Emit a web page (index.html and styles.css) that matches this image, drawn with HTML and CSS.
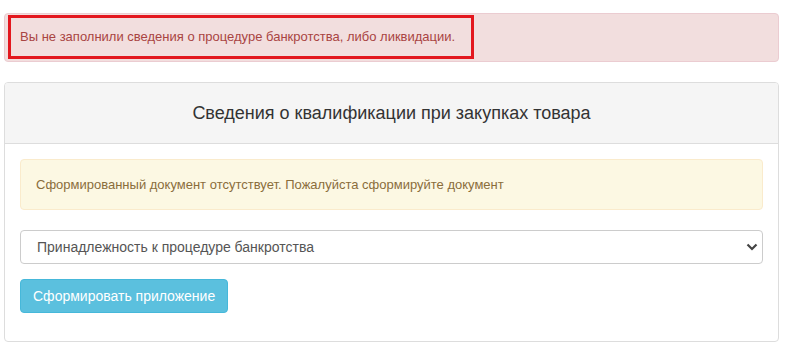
FILE: index.html
```html
<!DOCTYPE html>
<html lang="ru">

<head>
	<meta charset="UTF-8">
	<meta name="viewport" content="width=device-width, initial-scale=1.0">
	<title>Сведения о квалификации</title>

	<link rel="stylesheet" href="styles.css">
</head>

<body>
	<div class="page">
		<div class="alert alert-danger">
			<span class="mark">Вы не заполнили сведения о процедуре банкротства, либо ликвидации.</span>
		</div>

		<div class="panel">
			<div class="panel-heading">Сведения о квалификации при закупках товара</div>

			<div class="panel-body">
				<div class="alert alert-warning">
					Сформированный документ отсутствует. Пожалуйста сформируйте документ
				</div>

				<div class="select-wrap">
					<select class="form-control">
						<option>Принадлежность к процедуре банкротства</option>
					</select>
					<svg class="chevron" width="12" height="8" viewBox="0 0 12 8">
						<path d="M1.5 1.5 L6 6 L10.5 1.5" fill="none" stroke="#444" stroke-width="2.2" />
					</svg>
				</div>

				<button type="button" class="btn btn-info">Сформировать приложение</button>
			</div>
		</div>
	</div>
</body>

</html>
```

FILE: styles.css
```css
body {
	margin: 0;
	background-color: #fff;
	font-family: "Liberation Sans", Arial, sans-serif;
	color: #333;
}

.page {
	width: 775px;
	padding: 13px 0 0 4px;
}

.alert {
	border: 1px solid transparent;
	border-radius: 4px;
	font-size: 13px;
	line-height: 19px;
}

.alert-danger {
	background-color: #f2dede;
	border-color: #ebccd1;
	color: #a94442;
	padding: 1px 3px 2px 3px;
	margin-bottom: 20px;
}

.mark {
	display: block;
	width: 466px;
	box-sizing: border-box;
	border: 3px solid #e3171e;
	padding: 9px 9px 10px 9px;
}

.alert-warning {
	background-color: #fcf8e3;
	border-color: #faebcc;
	color: #8a6d3b;
	padding: 15px;
	margin-bottom: 20px;
}

.panel {
	border: 1px solid #ddd;
	border-radius: 4px;
	background-color: #fff;
}

.panel-heading {
	background-color: #f5f5f5;
	border-bottom: 1px solid #ddd;
	border-radius: 3px 3px 0 0;
	padding: 19px 15px;
	font-size: 18px;
	line-height: 22px;
	text-align: center;
	color: #333;
}

.panel-body {
	padding: 15px 15px 28px 15px;
}

.select-wrap {
	position: relative;
	margin-bottom: 15px;
}

.form-control {
	display: block;
	width: 100%;
	height: 34px;
	box-sizing: border-box;
	appearance: none;
	-webkit-appearance: none;
	background-color: #fff;
	border: 1px solid #ccc;
	border-radius: 4px;
	padding: 0 30px 0 16px;
	font-family: "Liberation Sans", Arial, sans-serif;
	font-size: 14px;
	color: #555;
}

.chevron {
	position: absolute;
	right: 5px;
	top: 13px;
}

.btn {
	display: inline-block;
	height: 34px;
	padding: 0 12px;
	font-family: "Liberation Sans", Arial, sans-serif;
	font-size: 14px;
	border: 1px solid transparent;
	border-radius: 4px;
	cursor: pointer;
}

.btn-info {
	background-color: #5bc0de;
	border-color: #46b8da;
	color: #fff;
}
```
